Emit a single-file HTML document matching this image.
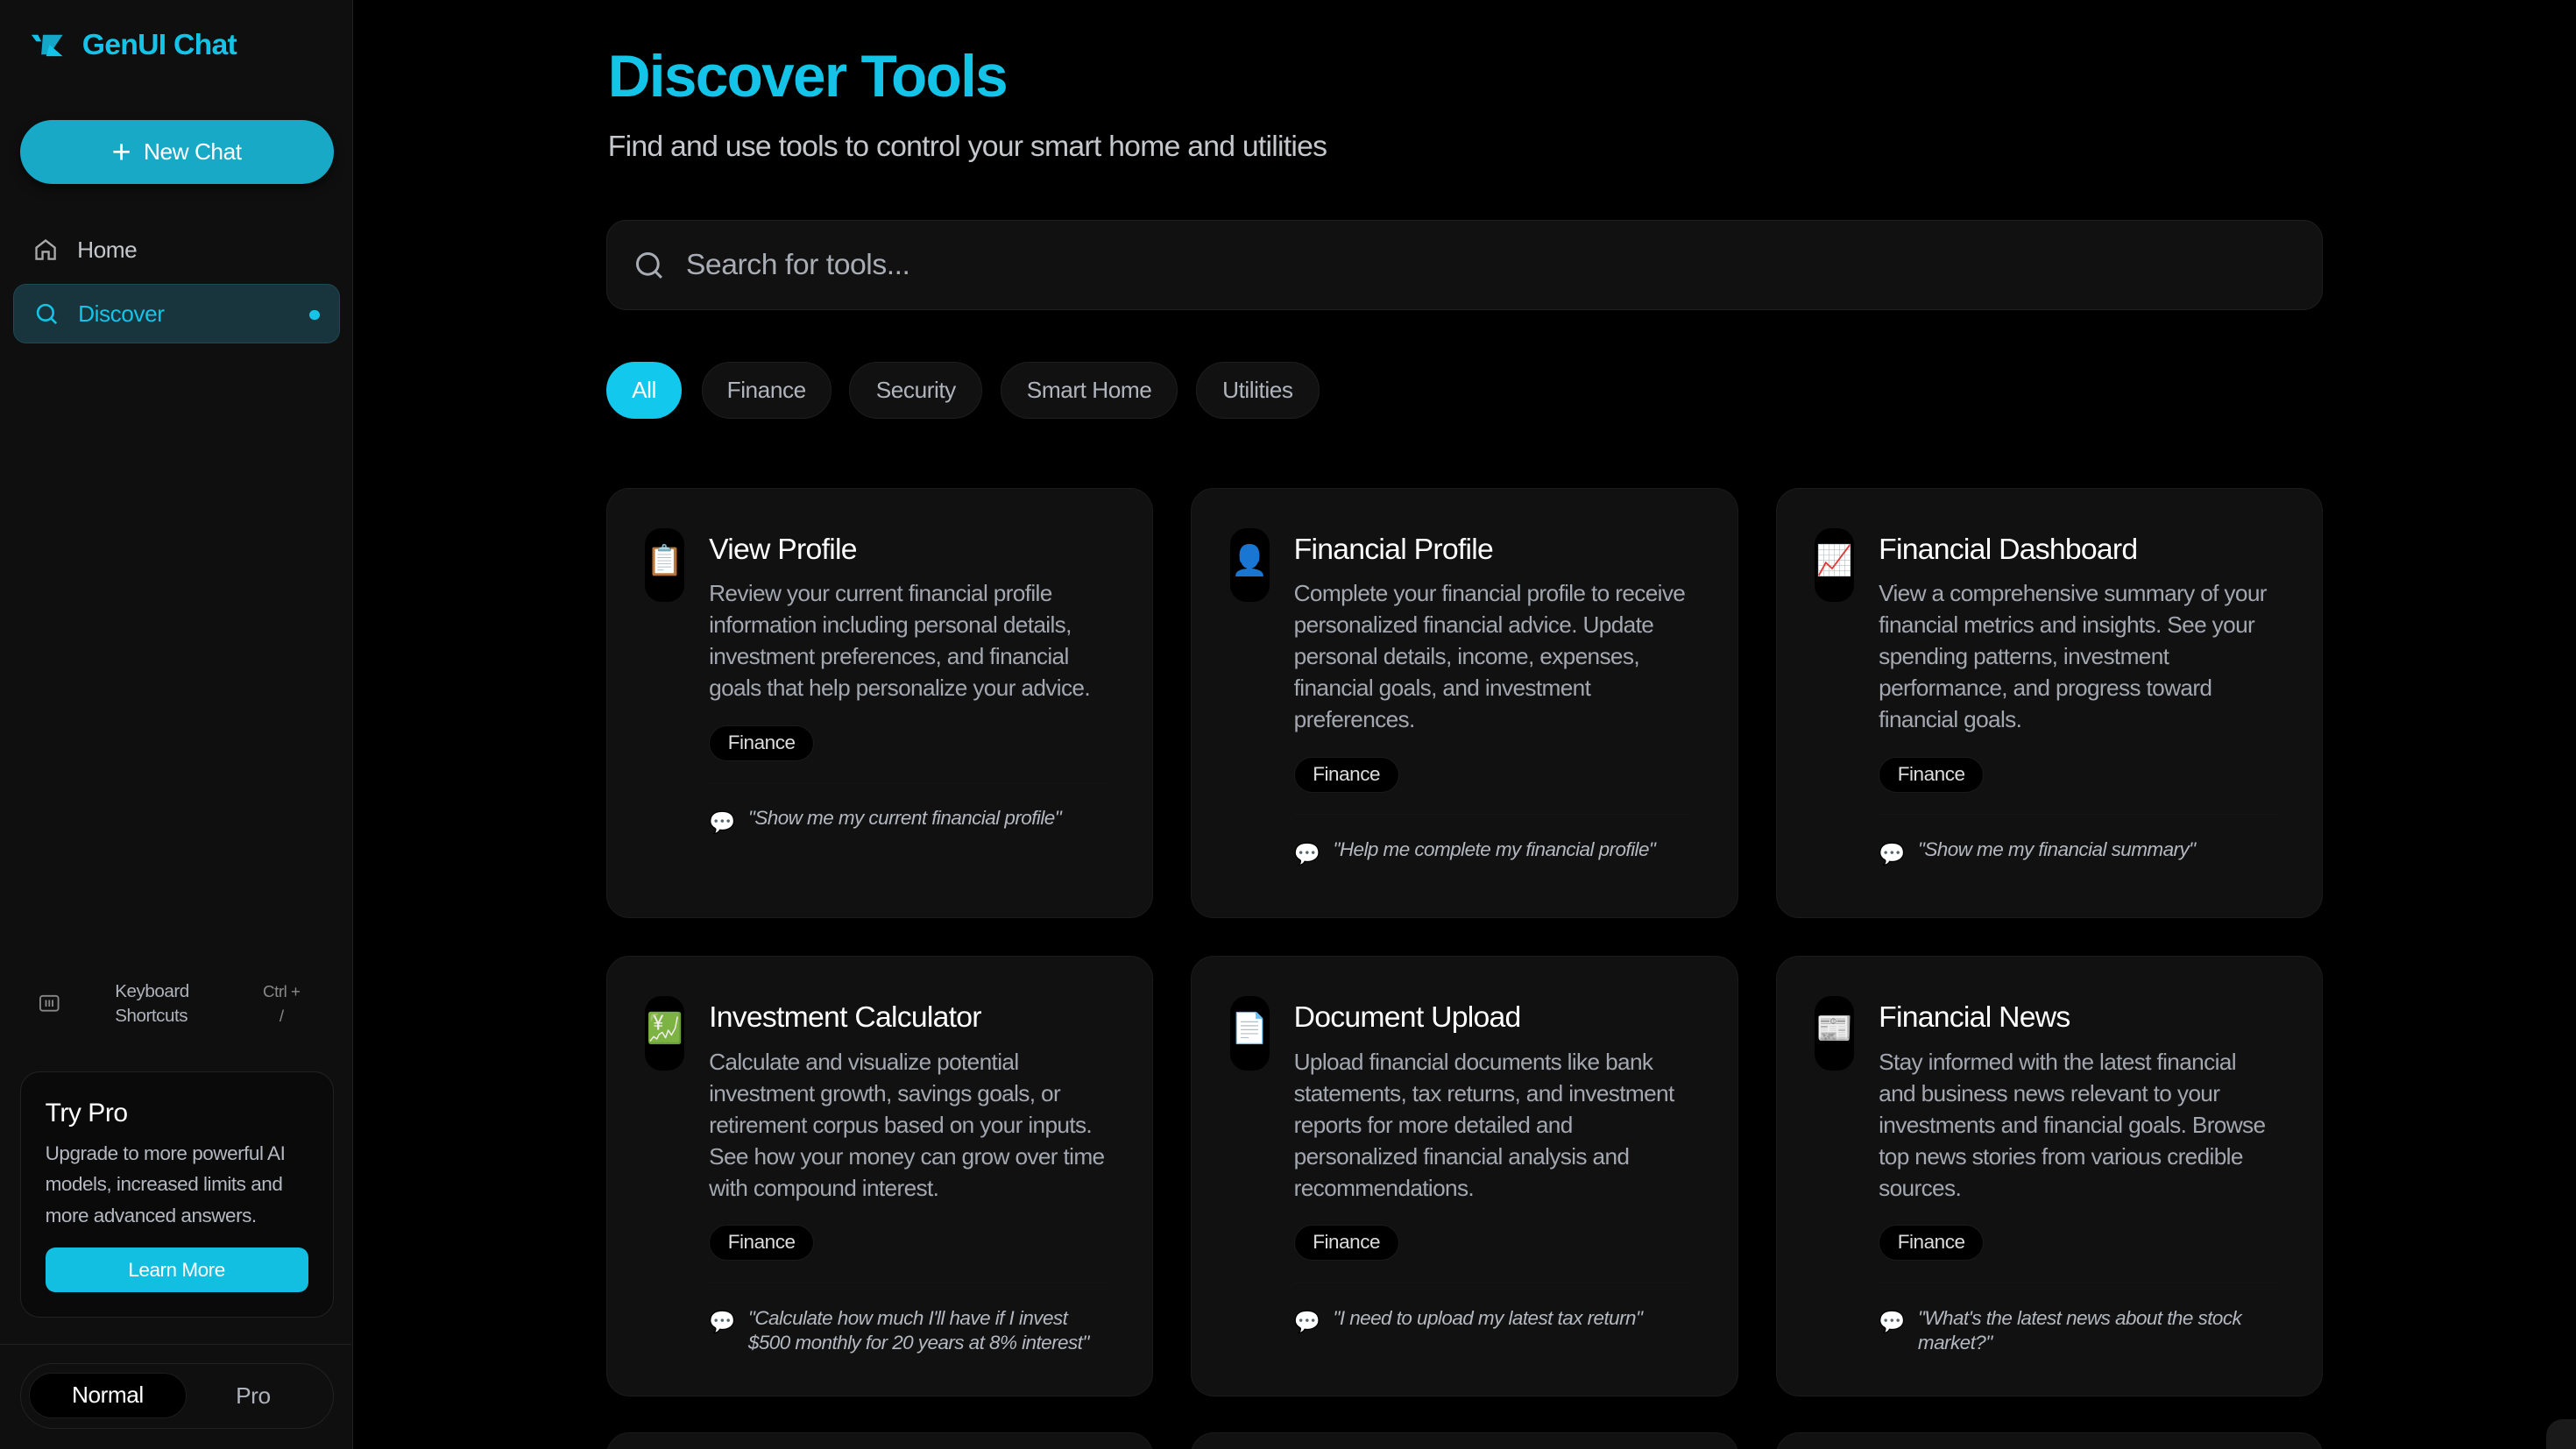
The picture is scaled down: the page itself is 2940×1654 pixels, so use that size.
<!DOCTYPE html>
<html><head><meta charset="utf-8"><style>
*{box-sizing:border-box;margin:0;padding:0}
html,body{width:1568px;height:882px;overflow:hidden;background:#000}
body{zoom:1.875;font-family:"Liberation Sans",sans-serif;color:#fff;position:relative;letter-spacing:-0.25px}
.sb{position:absolute;left:0;top:0;width:215px;height:882px;background:#0f0f0f;border-right:1px solid #222}
.logo{position:absolute;left:18px;top:17px;display:flex;align-items:center;gap:10px;color:#14c4e8;font-weight:bold;font-size:18px;letter-spacing:-0.4px}
.nc{position:absolute;left:12px;top:73px;width:191px;height:39px;border-radius:20px;background:#18a9c7;display:flex;align-items:center;justify-content:center;font-size:14px;gap:8px;box-shadow:0 3px 6px rgba(0,0,0,.5)}
.nav{position:absolute;left:8px;width:199px;height:36px;display:flex;align-items:center;font-size:14px;padding-left:12px;gap:12px}
.disc{background:#18343d;border:1px solid #1f4954;border-radius:8px;color:#14c4e8}
.dot{position:absolute;right:12px;top:15px;width:6px;height:6px;border-radius:3px;background:#14c4e8}
.ks{position:absolute;left:24px;top:596px;width:170px;font-size:11px;color:#aeb2ba}
.pro{position:absolute;left:12px;top:652px;width:191px;height:150px;border:1px solid #222;border-radius:12px;background:#0a0a0a;padding:16px 15px}
.pro h3{font-size:16px;font-weight:normal;margin-bottom:6px}
.pro p{font-size:12px;line-height:19px;color:#b4b8c0}
.lm{margin-top:10px;height:27px;border-radius:6px;background:#12bfe0;font-size:12px;display:flex;align-items:center;justify-content:center}
.div{position:absolute;left:0;top:818px;width:214px;border-top:1px solid #222}
.tg{position:absolute;left:12px;top:830px;width:191px;height:40px;border:1px solid #222;border-radius:20px}
.tg .n{position:absolute;left:5px;top:5px;width:96px;height:28px;border-radius:14px;background:#000;border:1px solid #1c1c1c;font-size:14px;display:flex;align-items:center;justify-content:center}
.tg .p{position:absolute;left:131px;top:11px;font-size:14px;color:#aeb2ba}
h1{position:absolute;left:370px;top:26px;font-size:36px;color:#14c4e8;font-weight:bold;letter-spacing:-0.9px}
.sub{position:absolute;left:370px;top:79px;font-size:18px;color:#c4c7cc;letter-spacing:-0.4px}
.search{position:absolute;left:369px;top:134px;width:1045px;height:55px;background:#111;border:1px solid #1e1e1e;border-radius:12px;display:flex;align-items:center;padding-left:16px;gap:13px;font-size:18px;color:#a8acb4}
.pill{position:absolute;top:220px;height:35px;border-radius:18px;background:#111;border:1px solid #1e1e1e;font-size:14px;color:#b0b4bc;display:flex;align-items:center;justify-content:center}
.card{position:absolute;width:333px;background:#111;border:1px solid #1b1b1b;border-radius:14px}
.ic{position:absolute;left:23px;top:24px;width:24px;height:45px;background:#000;border-radius:10px;font-size:18px;text-align:center;line-height:40px;overflow:hidden}
.ct{position:absolute;left:62px;top:26px;width:242px}
.ct h2{font-size:18px;font-weight:normal;margin-bottom:6px;line-height:22px;letter-spacing:-0.4px}
.ct p{font-size:14px;line-height:19.2px;color:#a3a7b0;letter-spacing:-0.35px}
.tag{display:inline-block;margin-top:13px;height:22px;line-height:20px;padding:0 11px;border-radius:11px;background:#000;border:1px solid #1a1a1a;font-size:12px;color:#ddd}
.ex{margin-top:13px;border-top:1px solid #151515;padding-top:14px;padding-right:6px;display:flex;gap:8px;font-size:12px;font-style:italic;color:#b4b8c0;line-height:15px;letter-spacing:-0.3px}
.ex span:first-child{font-style:normal;font-size:13px;margin-top:3px}
</style></head><body>
<div class="sb">
 <div class="logo"><svg width="22" height="16" viewBox="0 0 22 16"><path d="M1 2h4l2 4h-3z" fill="#14c4e8"/><path d="M8 2h12l-8 12h-5z" fill="#14a7c7"/><path d="M12 8l8 7h-10z" fill="#14c4e8"/></svg>GenUI Chat</div>
 <div class="nc"><span style="font-size:20px;font-weight:300;line-height:1">+</span>New Chat</div>
 <div class="nav" style="top:134px;color:#c4c7cc"><svg width="15" height="15" viewBox="0 0 24 24" fill="none" stroke="#aaa" stroke-width="2"><path d="M3 10l9-7 9 7v11h-6v-7H9v7H3z"/></svg>Home</div>
 <div class="nav disc" style="top:173px"><svg width="15" height="15" viewBox="0 0 24 24" fill="none" stroke="#14c4e8" stroke-width="2.2"><circle cx="11" cy="11" r="7.5"/><path d="M17 17l4.5 4.5"/></svg>Discover<span class="dot"></span></div>
 <div class="ks"><svg style="position:absolute;left:0;top:9px" width="12" height="12" viewBox="0 0 12 12" fill="none" stroke="#888"><rect x="0.5" y="1.5" width="11" height="9" rx="1.5"/><path d="M4 4v4M6 4v4M8 4v4"/></svg><div style="position:absolute;left:46px;top:0;line-height:15px">Keyboard<br>Shortcuts</div><div style="position:absolute;left:136px;top:0;line-height:15px;font-size:10px;text-align:center;color:#888">Ctrl +<br>/</div></div>
 <div class="pro"><h3>Try Pro</h3><p>Upgrade to more powerful AI models, increased limits and more advanced answers.</p><div class="lm">Learn More</div></div>
 <div class="div"></div>
 <div class="tg"><div class="n">Normal</div><div class="p">Pro</div></div>
</div>
<h1>Discover Tools</h1>
<div class="sub">Find and use tools to control your smart home and utilities</div>
<div class="search"><svg width="19" height="19" viewBox="0 0 24 24" fill="none" stroke="#a8acb4" stroke-width="2"><circle cx="11" cy="11" r="8"/><path d="M17 17l4.5 4.5"/></svg>Search for tools...</div>
<div class="pill" style="left:369px;width:46px;background:#12c8ec;border-color:#12c8ec;color:#fff">All</div>
<div class="pill" style="left:427px;width:79px">Finance</div>
<div class="pill" style="left:517px;width:81px">Security</div>
<div class="pill" style="left:609px;width:108px">Smart Home</div>
<div class="pill" style="left:728px;width:75px">Utilities</div>

<div class="card" style="left:369px;top:297px;height:262px"><div class="ic">📋</div><div class="ct"><h2>View Profile</h2><p>Review your current financial profile information including personal details, investment preferences, and financial goals that help personalize your advice.</p><span class="tag">Finance</span><div class="ex"><span>💬</span><span>"Show me my current financial profile"</span></div></div></div>
<div class="card" style="left:725px;top:297px;height:262px"><div class="ic">👤</div><div class="ct"><h2>Financial Profile</h2><p>Complete your financial profile to receive personalized financial advice. Update personal details, income, expenses, financial goals, and investment preferences.</p><span class="tag">Finance</span><div class="ex"><span>💬</span><span>"Help me complete my financial profile"</span></div></div></div>
<div class="card" style="left:1081px;top:297px;height:262px"><div class="ic">📈</div><div class="ct"><h2>Financial Dashboard</h2><p>View a comprehensive summary of your financial metrics and insights. See your spending patterns, investment performance, and progress toward financial goals.</p><span class="tag">Finance</span><div class="ex"><span>💬</span><span>"Show me my financial summary"</span></div></div></div>

<div class="card" style="left:369px;top:582px;height:268px"><div class="ic">💹</div><div class="ct"><h2>Investment Calculator</h2><p>Calculate and visualize potential investment growth, savings goals, or retirement corpus based on your inputs. See how your money can grow over time with compound interest.</p><span class="tag">Finance</span><div class="ex"><span>💬</span><span>"Calculate how much I'll have if I invest $500 monthly for 20 years at 8% interest"</span></div></div></div>
<div class="card" style="left:725px;top:582px;height:268px"><div class="ic">📄</div><div class="ct"><h2>Document Upload</h2><p>Upload financial documents like bank statements, tax returns, and investment reports for more detailed and personalized financial analysis and recommendations.</p><span class="tag">Finance</span><div class="ex"><span>💬</span><span>"I need to upload my latest tax return"</span></div></div></div>
<div class="card" style="left:1081px;top:582px;height:268px"><div class="ic">📰</div><div class="ct"><h2>Financial News</h2><p>Stay informed with the latest financial and business news relevant to your investments and financial goals. Browse top news stories from various credible sources.</p><span class="tag">Finance</span><div class="ex"><span>💬</span><span>"What's the latest news about the stock market?"</span></div></div></div>

<div class="card" style="left:369px;top:872px;height:40px"></div>
<div class="card" style="left:725px;top:872px;height:40px"></div>
<div class="card" style="left:1081px;top:872px;height:40px"></div>
<div style="position:absolute;left:1550px;top:864px;width:30px;height:30px;border-radius:10px;background:#1a1a1a"></div>
</body></html>
